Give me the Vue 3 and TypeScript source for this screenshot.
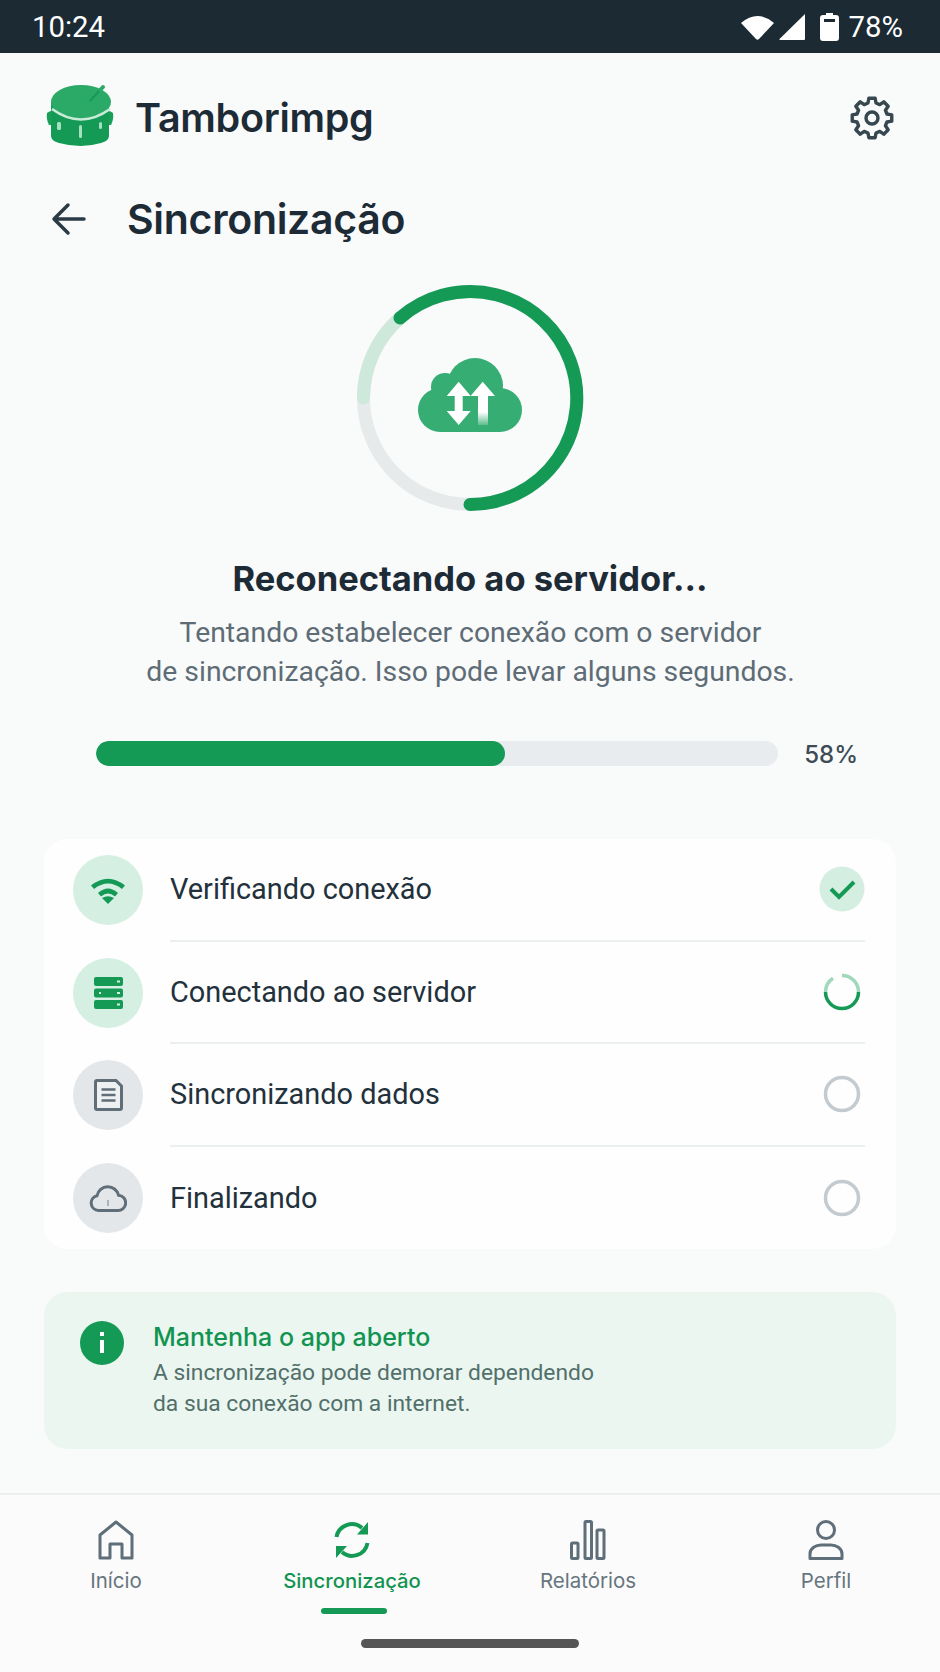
<template>
  <div class="screen">
    <div class="status-bar">
      <span class="time">10:24</span>
      <div class="status-right">
        <svg width="33" height="26" viewBox="0 0 33 26"><path d="M0 9Q16.500-5 33 9L18 25Q16.500 26.500 15 25Z" fill="#fff"/></svg>
        <svg width="26" height="26" viewBox="0 0 26 26"><path d="M26 0V25Q26 26 25 26H1Q0 26 .500 25Z" fill="#fff"/></svg>
        <svg class="battery" width="19" height="28" viewBox="0 0 19 28"><path d="M6 0H13V2H16Q19 2 19 5V25Q19 28 16 28H3Q0 28 0 25V5Q0 2 3 2H6Z" fill="#fff"/><rect x="4" y="6" width="11" height="3" fill="#1b2a33"/></svg>
        <span class="pct">78%</span>
      </div>
    </div>

    <header class="app-header">
      <div class="brand">
        <svg class="logo" width="68" height="66" viewBox="10 14 68 66">
          <path d="M11 43q2-2 5-2v14h-3q-3-6-2-12zM77 43q-2-2-5-2v14h3q3-6 2-12z" fill="#1a9f58"/>
          <path d="M15 32V66q0 5 8 7 22 6 42 0 8-2 8-7V32z" fill="#159a56"/>
          <path d="M54 31 67 17" stroke="#2aaa66" stroke-width="4" stroke-linecap="round"/>
          <ellipse cx="45" cy="32" rx="30" ry="17" fill="#2aaa66"/>
          <path d="M54 31 63 21" stroke="#159a56" stroke-width="2"/>
          <path d="M16 39Q45 60 74 39" fill="none" stroke="#c9ebd8" stroke-width="2.500"/>
          <rect x="21" y="52" width="4" height="8" rx="1.500" fill="#a7e0c1"/>
          <rect x="43" y="55" width="3" height="13" rx="1.500" fill="#a7e0c1"/>
          <rect x="63" y="52" width="3" height="7" rx="1.500" fill="#a7e0c1"/>
        </svg>
        <span class="brand-name">Tamborimpg</span>
      </div>
      <svg class="gear" width="48" height="48" viewBox="0 0 48 48" fill="none" stroke="#36474f" stroke-width="3.400" stroke-linejoin="round">
        <path :d="gearPath"/>
        <circle cx="24" cy="24" r="6"/>
      </svg>
    </header>

    <div class="title-row">
      <svg width="38" height="38" viewBox="0 0 38 38" fill="none" stroke="#2b3b45" stroke-width="3.500" stroke-linecap="round" stroke-linejoin="round"><path d="M35 19H5M19 5 5 19l14 14"/></svg>
      <h1>Sincronização</h1>
    </div>

    <div class="ring-wrap">
      <svg width="232" height="232" viewBox="0 0 232 232" fill="none" stroke-width="13">
        <defs>
          <linearGradient id="arrowFade" x1="0" y1="0" x2="0" y2="1">
            <stop offset="0.7" stop-color="#fff"/>
            <stop offset="1" stop-color="#fff" stop-opacity="0.2"/>
          </linearGradient>
        </defs>
        <circle cx="116" cy="116" r="106.500" stroke="#e6eaeb"/>
        <path d="M9.500 116A106.500 106.500 0 0 1 46 36" stroke="#cfe8dc" stroke-linecap="round"/>
        <path d="M46 36A106.500 106.500 0 1 1 116 222.500" stroke="#159a56" stroke-linecap="round"/>
        <g fill="#35ad73" stroke="none">
          <circle cx="86" cy="128" r="22"/>
          <circle cx="91" cy="105" r="14"/>
          <circle cx="121" cy="104" r="28"/>
          <circle cx="146" cy="128" r="22"/>
          <rect x="86" y="110" width="60" height="40"/>
        </g>
        <path d="M104.700 99.700 116.700 114H108.700V129H116.700L104.700 143 92.700 129H100.700V114H92.700Z" fill="#fff" stroke="none"/>
        <path d="M128.700 99.700 141 114H134V143H124V114H116.500Z" fill="url(#arrowFade)" stroke="none"/>
      </svg>
    </div>

    <h2 class="heading">Reconectando ao servidor...</h2>
    <p class="sub">Tentando estabelecer conexão com o servidor<br />de sincronização. Isso pode levar alguns segundos.</p>

    <div class="progress">
      <div class="track"><div class="fill" :style="{ width: fillWidth + '%' }"></div></div>
      <span class="progress-label">{{ progress }}%</span>
    </div>

    <section class="steps">
      <div v-for="(step, i) in steps" :key="step.label" class="step">
        <div class="step-icon" :class="{ done: step.state !== 'idle' }">
          <svg v-if="i === 0" width="36" height="28" viewBox="0 0 36 28">
            <path d="M1 9.500Q18-4 35 9.500l-3 3.500Q18 2 4 13z" fill="#159a56"/>
            <path d="M8 17q10-9 20 0l-3 3.500q-7-6-14 0z" fill="#159a56"/>
            <path d="M12 22q6-3.500 12 0l-6 6z" fill="#159a56"/>
          </svg>
          <svg v-else-if="i === 1" width="29" height="32" viewBox="0 0 29 32">
            <g fill="#159a56"><rect y="0" width="29" height="9" rx="2"/><rect y="11.500" width="29" height="9" rx="2"/><rect y="23" width="29" height="9" rx="2"/></g>
            <g fill="#d5efe1"><rect x="23" y="3.500" width="3" height="2"/><rect x="23" y="15" width="3" height="2"/><rect x="23" y="26.500" width="3" height="2"/><rect x="5" y="15" width="2" height="2"/></g>
          </svg>
          <svg v-else-if="i === 2" width="29" height="32" viewBox="0 0 29 32" fill="#eef1f2" stroke="#5f6e78" stroke-width="3">
            <path d="M1.500 3q0-1.500 1.500-1.500H22L27.500 7v22q0 1.500-1.500 1.500H3Q1.500 30.500 1.500 29z"/>
            <path d="M7.500 10.500h14M7.500 16h14M7.500 21.500h14" fill="none" stroke-width="2.500"/>
          </svg>
          <svg v-else width="38" height="30" viewBox="0 0 38 30" fill="none" stroke="#5f6e78" stroke-width="3">
            <path d="M9.500 27.500a7.500 7.500 0 0 1-1.500-14.800 11 11 0 0 1 21.500-.5 7.500 7.500 0 0 1-1 15.300z"/>
            <path d="M19 17v6" stroke="#aab4ba" stroke-width="2"/>
          </svg>
        </div>
        <div class="step-body">
          <span>{{ step.label }}</span>
          <svg v-if="step.state === 'done'" class="state" width="46" height="46" viewBox="0 0 46 46">
            <circle cx="23" cy="23" r="22.500" fill="#d4eee1"/>
            <path d="M12 23l8 8 15-15" fill="none" stroke="#159a56" stroke-width="4"/>
          </svg>
          <svg v-else-if="step.state === 'active'" class="state" width="46" height="46" viewBox="0 0 46 46" fill="none" stroke-width="3.500">
            <path d="M6.500 23A16.500 16.500 0 0 0 39.500 23" stroke="#159a56"/>
            <path d="M39.500 23A16.500 16.500 0 0 0 23 6.500" stroke="#9fd8bb"/>
            <path d="M14 9.300A16.500 16.500 0 0 0 6.500 23" stroke="#9fd8bb"/>
          </svg>
          <svg v-else class="state" width="46" height="46" viewBox="0 0 46 46" fill="none">
            <circle cx="23" cy="23" r="16.500" stroke="#c3cbd1" stroke-width="3.500"/>
          </svg>
        </div>
      </div>
    </section>

    <section class="notice">
      <svg class="info" width="44" height="44" viewBox="0 0 44 44">
        <circle cx="22" cy="22" r="22" fill="#159a56"/>
        <rect x="20" y="11" width="4" height="4" fill="#fff"/>
        <rect x="20" y="19" width="4" height="13" fill="#fff"/>
      </svg>
      <div>
        <div class="notice-title">Mantenha o app aberto</div>
        <p>A sincronização pode demorar dependendo<br />da sua conexão com a internet.</p>
      </div>
    </section>

    <nav class="tabbar">
      <div v-for="(tab, i) in tabs" :key="tab" class="tab" :class="{ active: i === 1 }">
        <svg v-if="i === 0" width="36" height="40" viewBox="0 0 36 40" fill="none" stroke="#5f6f7a" stroke-width="3" stroke-linejoin="round">
          <path d="M2 15 18 2 34 15V38H24V24H12V38H2Z"/>
        </svg>
        <svg v-else-if="i === 1" width="38" height="40" viewBox="0 0 38 40" fill="none" stroke="#159a56" stroke-width="4">
          <path d="M3.500 17A15.500 15.500 0 0 1 29 8"/>
          <path d="M34.500 23A15.500 15.500 0 0 1 9 32"/>
          <path d="M35 2V14.500H24Z" fill="#159a56" stroke="none"/>
          <path d="M3 38V26H14Z" fill="#159a56" stroke="none"/>
        </svg>
        <svg v-else-if="i === 2" width="36" height="40" viewBox="0 0 36 40" fill="none" stroke="#5f6f7a" stroke-width="3" stroke-linejoin="round">
          <rect x="1.500" y="23" width="6.500" height="15.500" rx="1"/>
          <rect x="15" y="1.500" width="6.500" height="37" rx="1"/>
          <rect x="27" y="10" width="7" height="28.500" rx="1"/>
        </svg>
        <svg v-else width="36" height="40" viewBox="0 0 36 40" fill="none" stroke="#5f6f7a" stroke-width="3">
          <circle cx="18" cy="10" r="8.500"/>
          <path d="M2 38.500V34C2 28 8 25 13 25H23C28 25 34 28 34 34V38.500Z" stroke-linejoin="round"/>
        </svg>
        <span>{{ tab }}</span>
        <i v-if="i === 1" class="tab-line"></i>
      </div>
      <div class="home-bar"></div>
    </nav>
  </div>
</template>

<script setup lang="ts">
type StepState = 'done' | 'active' | 'idle';

const progress = 58;
// the bar in the design runs a little ahead of its label
const fillWidth = 60;

const steps: { label: string; state: StepState }[] = [
  { label: 'Verificando conexão', state: 'done' },
  { label: 'Conectando ao servidor', state: 'active' },
  { label: 'Sincronizando dados', state: 'idle' },
  { label: 'Finalizando', state: 'idle' },
];

const tabs = ['Início', 'Sincronização', 'Relatórios', 'Perfil'];

// 8 tooth gear, drawn around the centre of a 48x48 box
const gearPath = (() => {
  const pt = (r: number, deg: number) => {
    const a = (deg * Math.PI) / 180;
    return `${(24 + r * Math.cos(a)).toFixed(2)} ${(24 + r * Math.sin(a)).toFixed(2)}`;
  };
  const parts: string[] = [];
  for (let k = 0; k < 8; k++) {
    const a = k * 45 - 90;
    parts.push(pt(15.5, a - 15), pt(20, a - 9), pt(20, a + 9), pt(15.5, a + 15));
  }
  return `M${parts.join('L')}Z`;
})();
</script>

<style>
html, body { margin: 0; background: #f9fafa; }
</style>

<style scoped>
.screen {
  width: 940px;
  height: 1672px;
  background: #f9fafa;
  font-family: Inter, "Noto Sans", sans-serif;
  color: #1d2b36;
  overflow: hidden;
  display: flex;
  flex-direction: column;
}

.status-bar {
  height: 53px;
  background: #1b2a33;
  color: #fff;
  display: flex;
  align-items: center;
  justify-content: space-between;
  padding: 0 37px 0 32px;
  box-sizing: border-box;
  flex-shrink: 0;
  font-family: Roboto, sans-serif;
  font-size: 29.300px;
}
.status-right { display: flex; align-items: center; gap: 5px; }
.battery { margin-left: 10px; }
.pct { margin-left: 5px; }

.app-header {
  display: flex;
  align-items: center;
  justify-content: space-between;
  padding: 31px 44px 0 46px;
}
.brand { display: flex; align-items: center; gap: 21px; }
.brand-name { font-size: 39.500px; font-weight: 600; letter-spacing: -0.3px; margin-top: 2px; }
.gear { margin-top: 2px; }

.title-row {
  display: flex;
  align-items: center;
  gap: 40px;
  padding: 45px 0 0 49px;
  height: 48px;
}
.title-row h1 { margin: 0; font-size: 41px; font-weight: 600; letter-spacing: -0.3px; }

.ring-wrap { display: flex; justify-content: center; margin-top: 39px; }

.heading { margin: 42px 0 0; text-align: center; font-size: 34.500px; font-weight: 700; line-height: 46px; }
.sub { margin: 12px 0 0; text-align: center; font-size: 28.350px; line-height: 38.500px; color: #5e6c76; font-family: Roboto, sans-serif; padding-left: 1px; }

.progress { display: flex; align-items: center; gap: 26px; margin: 46px 0 0 96px; width: 762px; }
.track { flex: 1; height: 25px; border-radius: 12.500px; background: #e9ecee; overflow: hidden; }
.fill { height: 100%; border-radius: 12.500px; background: #159a56; }
.progress-label { font-size: 24px; font-weight: 500; color: #3d4b55; margin-top: 3px; }

.steps {
  margin: 70px 44px 0;
  background: #fefefe;
  border-radius: 24px;
  padding: 0 31px 0 29px;
}
.step { display: flex; align-items: center; gap: 27px; height: 102.500px; }
.step-icon {
  width: 70px;
  height: 70px;
  border-radius: 50%;
  background: #e4e7ea;
  display: flex;
  align-items: center;
  justify-content: center;
  flex-shrink: 0;
}
.step-icon.done { background: #d5efe2; }
.step-body {
  flex: 1;
  height: 100%;
  display: flex;
  align-items: center;
  justify-content: space-between;
  font-family: Roboto, sans-serif;
  font-size: 28.900px;
  color: #22313b;
  border-bottom: 2px solid #eceff0;
  box-sizing: border-box;
}
.step:last-child .step-body { border-bottom: none; }

.notice {
  margin: 43px 44px 0;
  height: 157px;
  background: #ebf6f1;
  border-radius: 24px;
  display: flex;
  gap: 29px;
  padding: 27px 36px 0;
  box-sizing: border-box;
}
.info { flex-shrink: 0; margin-top: 2px; }
.notice-title { font-size: 25px; font-weight: 500; color: #119450; line-height: 36px; }
.notice p { margin: 2px 0 0; font-family: Roboto, sans-serif; font-size: 22.800px; line-height: 31px; color: #52706a; }

.tabbar {
  position: relative;
  margin-top: 44px;
  flex: 1;
  border-top: 2px solid #eceeef;
  display: grid;
  grid-template-columns: 236px 236px 236px 236px;
  justify-content: center;
  background: #fbfbfb;
}
.tab {
  position: relative;
  display: flex;
  flex-direction: column;
  align-items: center;
  padding-top: 25px;
  font-size: 20.500px;
  color: #66757f;
}
.tab:nth-child(4) { padding-left: 4px; }
.tab span { margin-top: 8px; }
.tab.active { color: #119450; font-weight: 500; font-size: 20.300px; }
.tab-line {
  position: absolute;
  top: 113px;
  width: 66px;
  height: 6px;
  border-radius: 3px;
  background: #159a56;
  transform: translateX(2px);
}
.home-bar {
  position: absolute;
  left: 361px;
  bottom: 24px;
  width: 218px;
  height: 9px;
  border-radius: 5px;
  background: #555;
}
</style>
